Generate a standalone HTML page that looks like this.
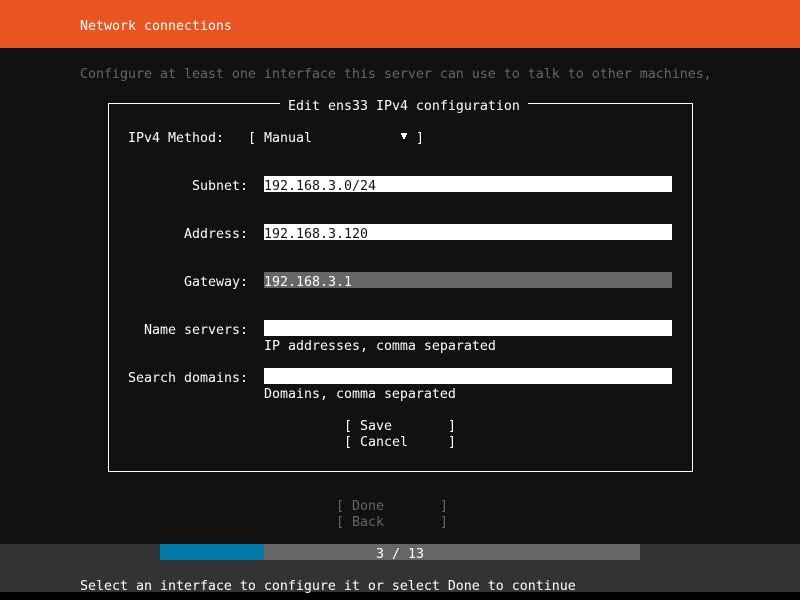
<!DOCTYPE html>
<html>
<head>
<meta charset="utf-8">
<style>
html,body{margin:0;padding:0;width:800px;height:600px;overflow:hidden;background:#111;}
body{position:relative;font-family:"DejaVu Sans Mono","Liberation Mono",monospace;font-size:13.29px;line-height:16px;color:#fff;}
.b{position:absolute;}
.t{position:absolute;white-space:pre;height:16px;line-height:16px;margin-top:3px;}
.d{color:#666;}
</style>
</head>
<body>
<div class="b" style="left:0;top:0;width:800px;height:48px;background:#e95420"></div>
<div class="b" style="left:0;top:544px;width:800px;height:48px;background:#333"></div>
<div class="b" style="left:0;top:592px;width:800px;height:8px;background:#000"></div>
<div class="b" style="left:160px;top:544px;width:480px;height:16px;background:#666"></div>
<div class="b" style="left:160px;top:544px;width:104px;height:16px;background:#0079a8"></div>

<div class="b" style="left:108px;top:103px;width:172px;height:1px;background:#fff"></div>
<div class="b" style="left:528px;top:103px;width:165px;height:1px;background:#fff"></div>
<div class="b" style="left:108px;top:103px;width:1px;height:369px;background:#fff"></div>
<div class="b" style="left:692px;top:103px;width:1px;height:369px;background:#fff"></div>
<div class="b" style="left:108px;top:471px;width:585px;height:1px;background:#fff"></div>

<div class="b" style="left:264px;top:176px;width:408px;height:16px;background:#fff"></div>
<div class="b" style="left:264px;top:224px;width:408px;height:16px;background:#fff"></div>
<div class="b" style="left:264px;top:272px;width:408px;height:16px;background:#666"></div>
<div class="b" style="left:264px;top:320px;width:408px;height:16px;background:#fff"></div>
<div class="b" style="left:264px;top:368px;width:408px;height:16px;background:#fff"></div>

<div class="t" style="left:80px;top:16px">Network connections</div>
<div class="t d" style="left:80px;top:64px">Configure at least one interface this server can use to talk to other machines,</div>
<div class="t" style="left:288px;top:96px">Edit ens33 IPv4 configuration</div>
<div class="t" style="left:128px;top:128px">IPv4 Method:</div>
<div class="t" style="left:248px;top:128px">[ Manual</div>
<svg class="b" style="left:400px;top:132px" width="8" height="8" viewBox="0 0 8 8"><path d="M1 1h6v2h-1v2h-1v2h-2v-2h-1v-2h-1z" fill="#fff"/></svg>
<div class="t" style="left:416px;top:128px">]</div>

<div class="t" style="left:192px;top:176px">Subnet:</div>
<div class="t" style="left:264px;top:176px;color:#111">192.168.3.0/24</div>
<div class="t" style="left:184px;top:224px">Address:</div>
<div class="t" style="left:264px;top:224px;color:#111">192.168.3.120</div>
<div class="t" style="left:184px;top:272px">Gateway:</div>
<div class="t" style="left:264px;top:272px">192.168.3.1</div>
<div class="t" style="left:144px;top:320px">Name servers:</div>
<div class="t" style="left:264px;top:336px">IP addresses, comma separated</div>
<div class="t" style="left:128px;top:368px">Search domains:</div>
<div class="t" style="left:264px;top:384px">Domains, comma separated</div>
<div class="t" style="left:344px;top:416px">[ Save       ]</div>
<div class="t" style="left:344px;top:432px">[ Cancel     ]</div>
<div class="t d" style="left:336px;top:496px">[ Done       ]</div>
<div class="t d" style="left:336px;top:512px">[ Back       ]</div>
<div class="t" style="left:376px;top:544px">3 / 13</div>
<div class="t" style="left:80px;top:576px">Select an interface to configure it or select Done to continue</div>
</body>
</html>
